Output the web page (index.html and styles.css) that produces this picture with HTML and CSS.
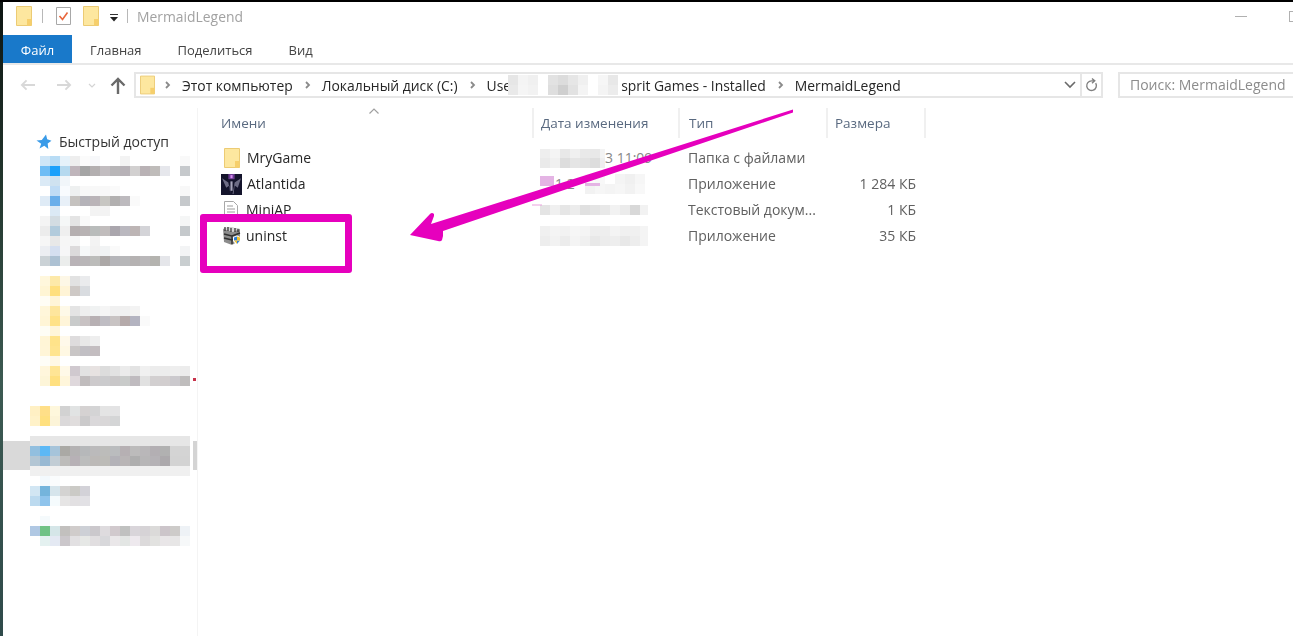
FILE: index.html
```html
<!DOCTYPE html>
<html lang="ru">
<head>
    <meta charset="UTF-8">
    <meta name="viewport" content="width=device-width, initial-scale=1.0">
    <title>MermaidLegend</title>
    <link rel="stylesheet" href="styles.css">
</head>
<body>
    <svg class="defs" width="0" height="0">
        <symbol id="folder" viewBox="0 0 16 20">
            <path d="M.5.5h15v19H.5z" fill="#fde79f" stroke="#eccb74"/>
            <path d="M11 13h4.500v6.500H11z" fill="#f6cf6c"/>
        </symbol>
        <symbol id="chev" viewBox="0 0 6 10">
            <path d="M1 2l3 3-3 3" fill="none" stroke="#8a8a8a" stroke-width="1.800"/>
        </symbol>
    </svg>

    <div class="screen">
        <div class="edge"></div>
        <div class="okno">
            <div class="titulo">
                <svg class="ic-folder"><use href="#folder"/></svg>
                <span class="sep"></span>
                <svg class="ic-check" viewBox="0 0 15 18">
                    <path d="M.5.5h14v17H.5z" fill="#fff" stroke="#a8a8a8"/>
                    <path d="M3.500 9l3 3.500 5-7" fill="none" stroke="#e8663c" stroke-width="1.600"/>
                </svg>
                <svg class="ic-folder ic-folder2"><use href="#folder"/></svg>
                <svg class="ic-drop" viewBox="0 0 10 8">
                    <path d="M1 0h8v1H1z" fill="#333"/>
                    <path d="M1 3h8L5 7.500z" fill="#222"/>
                </svg>
                <span class="sep sep2"></span>
                <span class="titulo-texto">MermaidLegend</span>
                <span class="ventana-btn min"></span>
                <span class="ventana-btn max"></span>
            </div>

            <div class="tabs">
                <span class="tab activo">Файл</span>
                <span class="tab">Главная</span>
                <span class="tab">Поделиться</span>
                <span class="tab">Вид</span>
            </div>

            <div class="direccion">
                <svg class="flecha" viewBox="0 0 16 12"><path d="M16 6H2M7 1L2 6l5 5" fill="none" stroke="#d8d8d8" stroke-width="2"/></svg>
                <svg class="flecha adelante" viewBox="0 0 16 12"><path d="M0 6h14M9 1l5 5-5 5" fill="none" stroke="#d8d8d8" stroke-width="2"/></svg>
                <svg class="mini-chev" viewBox="0 0 8 5"><path d="M1 1l3 3 3-3" fill="none" stroke="#d4d4d4" stroke-width="1.200"/></svg>
                <svg class="arriba" viewBox="0 0 16 17"><path d="M8 17V2M1.500 8.500L8 2l6.500 6.500" fill="none" stroke="#6a6a6a" stroke-width="2.400"/></svg>

                <div class="ruta">
                    <svg class="ic-folder ruta-folder"><use href="#folder"/></svg>
                    <svg class="chev chev-1"><use href="#chev"/></svg>
                    <span class="miga">Этот компьютер</span>
                    <svg class="chev"><use href="#chev"/></svg>
                    <span class="miga">Локальный диск (C:)</span>
                    <svg class="chev"><use href="#chev"/></svg>
                    <span class="miga">Use</span>
                    <svg class="ruta-mosaico" width="113" height="22">
                        <rect x="0" y="1" fill="#e6e6e6"/><rect x="10" y="1" fill="#f4f4f4"/><rect x="20" y="1" fill="#f0f0f0"/>
                        <rect x="0" y="11" fill="#e9e9e9"/><rect x="10" y="11" fill="#f5f5f5"/><rect x="20" y="11" fill="#f2f2f2"/>
                        <rect x="40" y="1" fill="#e2e2e2"/><rect x="50" y="1" fill="#dcdcdc"/><rect x="60" y="1" fill="#e6e6e6"/><rect x="70" y="1" fill="#f0f0f0"/>
                        <rect x="40" y="11" fill="#dedede"/><rect x="50" y="11" fill="#cfcfcf"/><rect x="60" y="11" fill="#e2e2e2"/><rect x="70" y="11" fill="#f4f4f4"/>
                        <rect x="90" y="1" fill="#f6f6f6"/><rect x="100" y="1" fill="#e8e8e8"/>
                        <rect x="90" y="11" fill="#f4f4f4"/><rect x="100" y="11" fill="#ececec"/>
                    </svg>
                    <span class="miga">sprit Games - Installed</span>
                    <svg class="chev"><use href="#chev"/></svg>
                    <span class="miga">MermaidLegend</span>
                    <svg class="ruta-abajo" viewBox="0 0 12 8"><path d="M1 1l5 5 5-5" fill="none" stroke="#6a6a6a" stroke-width="1.600"/></svg>
                    <span class="ruta-refresh">
                        <svg viewBox="0 0 14 16"><path d="M11.500 5.500A5.200 5.200 0 1 1 7 3H10M7.500 .5L10.500 3 7.500 5.500" fill="none" stroke="#808080" stroke-width="1.500"/></svg>
                    </span>
                </div>
                <div class="busqueda">Поиск: MermaidLegend</div>
            </div>

            <div class="cuerpo">
                <aside class="lateral">
                    <div class="acceso">
                        <svg class="estrella" viewBox="0 0 16 16"><path d="M10 .5l1.200 4.800 4.300 1.400-3.800 2.700.6 5.600-4-3.200-4.800 2.700 1.700-4.700L.5 6.500l5.300-.4z" fill="#3a9be8"/></svg>
                        <span>Быстрый доступ</span>
                    </div>
                    <svg class="mosaico" width="194" height="400" viewBox="0 156 194 400">
                        <rect class="sel" x="0" y="441" width="27" height="29" fill="#d9d9d9"/>
                        <rect class="sel" x="190" y="441" width="4" height="29" fill="#d4d4d4"/>
                        <!-- y = 156 -->
                        <rect x="37" y="156" fill="#cfe6f7"/><rect x="47" y="156" fill="#b8dcf5"/><rect x="57" y="156" fill="#e6f2fa"/><rect x="67" y="156" fill="#eeeeee"/><rect x="77" y="156" fill="#fbfbfb"/><rect x="87" y="156" fill="#f7f8fa"/><rect x="117" y="156" fill="#f3f3f3"/><rect x="177" y="156" fill="#f9f9f9"/>
                        <rect x="37" y="166" fill="#6fbdf5"/><rect x="47" y="166" fill="#1aa0fb"/><rect x="57" y="166" fill="#b5d9ef"/><rect x="67" y="166" fill="#bfb5bb"/><rect x="77" y="166" fill="#a5a5a5"/><rect x="87" y="166" fill="#b3afb0"/><rect x="97" y="166" fill="#c2bdc0"/><rect x="107" y="166" fill="#b8b6b8"/><rect x="117" y="166" fill="#b7b2b7"/><rect x="127" y="166" fill="#d2d0d0"/><rect x="137" y="166" fill="#b9b2b5"/><rect x="147" y="166" fill="#bfbcba"/><rect x="157" y="166" fill="#e6e7ec"/><rect x="177" y="166" fill="#c6c9cc"/>
                        <rect x="37" y="176" fill="#dbeaf6"/><rect x="47" y="176" fill="#cfe2f0"/><rect x="57" y="176" fill="#f1f6fa"/>
                        <rect x="47" y="186" fill="#c0dcf5"/><rect x="57" y="186" fill="#f8fbfe"/><rect x="67" y="186" fill="#eef0f0"/><rect x="77" y="186" fill="#f8f8f8"/><rect x="87" y="186" fill="#f8f8f8"/><rect x="97" y="186" fill="#f8f8f8"/><rect x="107" y="186" fill="#fafafa"/><rect x="177" y="186" fill="#f8f8f8"/>
                        <rect x="37" y="196" fill="#dfebf6"/><rect x="47" y="196" fill="#69aeea"/><rect x="57" y="196" fill="#e8f0f8"/><rect x="67" y="196" fill="#c5c2bf"/><rect x="77" y="196" fill="#b5b3b9"/><rect x="87" y="196" fill="#bab4b8"/><rect x="97" y="196" fill="#c7c6c2"/><rect x="107" y="196" fill="#b2b0b0"/><rect x="117" y="196" fill="#bdbabe"/><rect x="127" y="196" fill="#fafafa"/><rect x="177" y="196" fill="#c6c9cc"/>
                        <rect x="47" y="206" fill="#dbe9f5"/><rect x="87" y="206" fill="#f3f3f3"/><rect x="97" y="206" fill="#f3f3f3"/>
                        <rect x="37" y="216" fill="#f4f4f4"/><rect x="47" y="216" fill="#d3dce2"/><rect x="57" y="216" fill="#f5f7f7"/><rect x="67" y="216" fill="#e4e4e4"/><rect x="77" y="216" fill="#f9f9f9"/><rect x="177" y="216" fill="#f5f6f6"/>
                        <rect x="37" y="226" fill="#ececec"/><rect x="47" y="226" fill="#b2cbdc"/><rect x="57" y="226" fill="#efefef"/><rect x="67" y="226" fill="#b5afb0"/><rect x="77" y="226" fill="#b8b3b4"/><rect x="87" y="226" fill="#b9bcbb"/><rect x="97" y="226" fill="#c1bdbd"/><rect x="107" y="226" fill="#aaa6ad"/><rect x="117" y="226" fill="#bab8bf"/><rect x="127" y="226" fill="#bdb5b5"/><rect x="137" y="226" fill="#d4d4d8"/><rect x="177" y="226" fill="#c5c9cc"/>
                        <rect x="37" y="236" fill="#f6f6f6"/><rect x="47" y="236" fill="#e8e8e8"/><rect x="57" y="236" fill="#f6f6f6"/><rect x="67" y="236" fill="#f6f6f6"/><rect x="87" y="236" fill="#f3f3f3"/>
                        <rect x="37" y="246" fill="#eceef2"/><rect x="47" y="246" fill="#d5dff0"/><rect x="57" y="246" fill="#f6f6f7"/><rect x="67" y="246" fill="#dcdadb"/><rect x="77" y="246" fill="#f6f8f9"/><rect x="87" y="246" fill="#f1f1f1"/><rect x="97" y="246" fill="#f1f3f4"/><rect x="107" y="246" fill="#fafafa"/><rect x="177" y="246" fill="#f3f4f5"/>
                        <rect x="37" y="256" fill="#cbd2d6"/><rect x="47" y="256" fill="#adc1d3"/><rect x="57" y="256" fill="#ebedec"/><rect x="67" y="256" fill="#b9b3b7"/><rect x="77" y="256" fill="#b9b6b8"/><rect x="87" y="256" fill="#bcbcba"/><rect x="97" y="256" fill="#aca8a7"/><rect x="107" y="256" fill="#b5b5b9"/><rect x="117" y="256" fill="#b7b7b9"/><rect x="127" y="256" fill="#b5b2b2"/><rect x="137" y="256" fill="#b9b7b9"/><rect x="147" y="256" fill="#b4b3af"/><rect x="157" y="256" fill="#e5e6ea"/><rect x="177" y="256" fill="#c9ced0"/>
                        <!-- y = 276 -->
                        <rect x="37" y="276" fill="#fff7dc"/><rect x="47" y="276" fill="#fde9a9"/><rect x="57" y="276" fill="#fdf7e6"/><rect x="67" y="276" fill="#e2e2e2"/><rect x="77" y="276" fill="#eaebed"/>
                        <rect x="37" y="286" fill="#fff5d4"/><rect x="47" y="286" fill="#ffdf7e"/><rect x="57" y="286" fill="#fff4d6"/><rect x="67" y="286" fill="#cec9c6"/><rect x="77" y="286" fill="#d9dce0"/>
                        <rect x="37" y="296" fill="#fffdf5"/><rect x="47" y="296" fill="#fff5d8"/>
                        <rect x="37" y="306" fill="#fff6da"/><rect x="47" y="306" fill="#fee69d"/><rect x="57" y="306" fill="#fef9e8"/><rect x="67" y="306" fill="#e4e4e4"/><rect x="77" y="306" fill="#eeeeee"/><rect x="87" y="306" fill="#f0f2f2"/><rect x="97" y="306" fill="#f5f5f5"/><rect x="107" y="306" fill="#f0f0f0"/><rect x="117" y="306" fill="#f0f0f0"/><rect x="127" y="306" fill="#f3f3f3"/>
                        <rect x="37" y="316" fill="#fff5d6"/><rect x="47" y="316" fill="#ffe287"/><rect x="57" y="316" fill="#fff5d9"/><rect x="67" y="316" fill="#c9cbcb"/><rect x="77" y="316" fill="#c8c2c3"/><rect x="87" y="316" fill="#b7b0b3"/><rect x="97" y="316" fill="#bfbdc3"/><rect x="107" y="316" fill="#c8c3c3"/><rect x="117" y="316" fill="#b5aaaa"/><rect x="127" y="316" fill="#b3b3c0"/><rect x="137" y="316" fill="#fafafa"/>
                        <rect x="37" y="326" fill="#fefdf5"/><rect x="47" y="326" fill="#fff6da"/>
                        <rect x="37" y="336" fill="#fff5d6"/><rect x="47" y="336" fill="#ffe38a"/><rect x="57" y="336" fill="#fff9ea"/><rect x="67" y="336" fill="#dedcdd"/><rect x="77" y="336" fill="#e8e8e8"/><rect x="87" y="336" fill="#eeeeee"/>
                        <rect x="37" y="346" fill="#fff5d7"/><rect x="47" y="346" fill="#ffe48f"/><rect x="57" y="346" fill="#fff8e3"/><rect x="67" y="346" fill="#c9c6c6"/><rect x="77" y="346" fill="#c1bfc4"/><rect x="87" y="346" fill="#c3bdc0"/>
                        <rect x="37" y="356" fill="#fefdf7"/><rect x="47" y="356" fill="#fff8e6"/>
                        <rect x="37" y="366" fill="#fff6dc"/><rect x="47" y="366" fill="#ffe595"/><rect x="57" y="366" fill="#fff9e8"/><rect x="67" y="366" fill="#d0c9cf"/><rect x="77" y="366" fill="#e2e2e2"/><rect x="87" y="366" fill="#e7e2e1"/><rect x="97" y="366" fill="#dcdcdc"/><rect x="107" y="366" fill="#e2e2e2"/><rect x="117" y="366" fill="#ebebeb"/><rect x="127" y="366" fill="#e3e3e3"/><rect x="137" y="366" fill="#f0f0f0"/><rect x="147" y="366" fill="#ececec"/><rect x="157" y="366" fill="#ececec"/><rect x="167" y="366" fill="#eeeeee"/><rect x="177" y="366" fill="#ececec"/>
                        <rect x="37" y="376" fill="#fdf5d8"/><rect x="47" y="376" fill="#ffe080"/><rect x="57" y="376" fill="#fff6db"/><rect x="67" y="376" fill="#dfd8dc"/><rect x="77" y="376" fill="#c0bcbd"/><rect x="87" y="376" fill="#cdcacc"/><rect x="97" y="376" fill="#cbcbcd"/><rect x="107" y="376" fill="#c9c7c8"/><rect x="117" y="376" fill="#c9cbca"/><rect x="127" y="376" fill="#bfbbbf"/><rect x="137" y="376" fill="#e1e1e1"/><rect x="147" y="376" fill="#d2cfd0"/><rect x="157" y="376" fill="#d2cecf"/><rect x="167" y="376" fill="#cbc9cd"/><rect x="177" y="376" fill="#bfbdbd"/>
                        <rect class="punto" x="190" y="378" fill="#c8324a"/>
                        <!-- y = 406 -->
                        <rect x="27" y="406" fill="#fff0c4"/><rect x="37" y="406" fill="#ffdf88"/><rect x="47" y="406" fill="#fef7dc"/><rect x="57" y="406" fill="#d2d2d2"/><rect x="67" y="406" fill="#e1e3e3"/><rect x="77" y="406" fill="#d5d2d2"/><rect x="87" y="406" fill="#d4d4d5"/><rect x="97" y="406" fill="#e4e4e4"/><rect x="107" y="406" fill="#e3e3e4"/>
                        <rect x="27" y="416" fill="#fff2c9"/><rect x="37" y="416" fill="#ffe07f"/><rect x="47" y="416" fill="#fcf4d8"/><rect x="57" y="416" fill="#dbd9da"/><rect x="67" y="416" fill="#e0dddd"/><rect x="77" y="416" fill="#cbcacb"/><rect x="87" y="416" fill="#dad8da"/><rect x="97" y="416" fill="#d9d7d8"/><rect x="107" y="416" fill="#d4d5d6"/>
                        <!-- y = 436, selected row -->
                        <rect class="banda" x="27" y="436" fill="#e6e6e6"/>
                        <rect x="27" y="446" fill="#92bfdf"/><rect x="37" y="446" fill="#5cb8f5"/><rect x="47" y="446" fill="#a6c4da"/><rect x="57" y="446" fill="#aaa9a5"/><rect x="67" y="446" fill="#b4b2b3"/><rect x="77" y="446" fill="#b6b8ba"/><rect x="87" y="446" fill="#bbbabb"/><rect x="97" y="446" fill="#bcbcba"/><rect x="107" y="446" fill="#babcbe"/><rect x="117" y="446" fill="#b6b0b3"/><rect x="127" y="446" fill="#bcbbbb"/><rect x="137" y="446" fill="#b9b7b9"/><rect x="147" y="446" fill="#b3afb3"/><rect x="157" y="446" fill="#b1b1b1"/><rect x="167" y="446" fill="#d4d4d4"/><rect x="177" y="446" fill="#d4d4d4"/>
                        <rect x="27" y="456" fill="#b3c6d4"/><rect x="37" y="456" fill="#98b9d3"/><rect x="47" y="456" fill="#c2cdd5"/><rect x="57" y="456" fill="#bdbcba"/><rect x="67" y="456" fill="#b7b1b6"/><rect x="77" y="456" fill="#bcbdbd"/><rect x="87" y="456" fill="#bcb9b7"/><rect x="97" y="456" fill="#bcbbb7"/><rect x="107" y="456" fill="#b3b2b8"/><rect x="117" y="456" fill="#b9b5b6"/><rect x="127" y="456" fill="#aeaeae"/><rect x="137" y="456" fill="#b7b6b7"/><rect x="147" y="456" fill="#b5b2b6"/><rect x="157" y="456" fill="#aca9ac"/><rect x="167" y="456" fill="#d3d3d3"/><rect x="177" y="456" fill="#d3d3d3"/>
                        <rect class="banda" x="27" y="466" fill="#f0f0f0"/>
                        <!-- y = 476 -->
                        <rect x="37" y="476" fill="#f3f9fd"/><rect x="47" y="476" fill="#fafcfd"/>
                        <rect x="27" y="486" fill="#d2e6f3"/><rect x="37" y="486" fill="#74b4dc"/><rect x="47" y="486" fill="#d6e5ec"/><rect x="57" y="486" fill="#d4d3d2"/><rect x="67" y="486" fill="#cbcac6"/><rect x="77" y="486" fill="#d3d2d8"/>
                        <rect x="27" y="496" fill="#bcdaef"/><rect x="37" y="496" fill="#8fc4ec"/><rect x="47" y="496" fill="#f5fbfd"/><rect x="57" y="496" fill="#e6e5e5"/><rect x="67" y="496" fill="#e2e0e2"/><rect x="77" y="496" fill="#e2e1e5"/>
                        <!-- y = 516 -->
                        <rect x="37" y="516" fill="#f5fafc"/>
                        <rect x="27" y="526" fill="#b0c8e3"/><rect x="37" y="526" fill="#6fc285"/><rect x="47" y="526" fill="#d5e6e8"/><rect x="57" y="526" fill="#c2c0be"/><rect x="67" y="526" fill="#d0cccb"/><rect x="77" y="526" fill="#cdd0d6"/><rect x="87" y="526" fill="#cbc8cc"/><rect x="97" y="526" fill="#dedbde"/><rect x="107" y="526" fill="#d1c9cd"/><rect x="117" y="526" fill="#c0c1c0"/><rect x="127" y="526" fill="#d9d5da"/><rect x="137" y="526" fill="#d6d3d6"/><rect x="147" y="526" fill="#dbdad9"/><rect x="157" y="526" fill="#ccc5ca"/><rect x="167" y="526" fill="#cdcbc9"/><rect x="177" y="526" fill="#eef2f6"/>
                        <rect x="37" y="536" fill="#e4f1f0"/><rect x="47" y="536" fill="#e4e9f3"/><rect x="57" y="536" fill="#cbc7cb"/><rect x="67" y="536" fill="#e2e0e2"/><rect x="77" y="536" fill="#e6e8e6"/><rect x="87" y="536" fill="#e1dee0"/><rect x="97" y="536" fill="#d8d8db"/><rect x="107" y="536" fill="#eae7e9"/><rect x="117" y="536" fill="#e3e6e4"/><rect x="127" y="536" fill="#eee9ee"/><rect x="137" y="536" fill="#dcdadb"/><rect x="147" y="536" fill="#e2e2e0"/><rect x="157" y="536" fill="#e9e6e8"/><rect x="167" y="536" fill="#e7e6e6"/><rect x="177" y="536" fill="#f6f8f9"/>
                    </svg>
                </aside>

                <main class="lista">
                    <svg class="orden" viewBox="0 0 10 6"><path d="M.5 5.500L5 1l4.500 4.500" fill="none" stroke="#a0a0a0" stroke-width="1.200"/></svg>
                    <div class="cabecera">
                        <span class="col">Имени</span>
                        <span class="col">Дата изменения</span>
                        <span class="col">Тип</span>
                        <span class="col col-fin">Размера</span>
                    </div>

                    <div class="fila">
                        <span class="nombre">
                            <svg class="ic-item ic-item-folder"><use href="#folder"/></svg>
                            MryGame
                        </span>
                        <span class="fecha">
                            <svg class="pix" width="65" height="20">
                                <rect x="0" y="1" fill="#eeeeee"/><rect x="10" y="1" fill="#f4f4f4"/><rect x="20" y="1" fill="#e8e8e8"/><rect x="30" y="1" fill="#f0f0f0"/><rect x="40" y="1" fill="#e9e9e9"/><rect x="50" y="1" fill="#e8e8e8"/><rect x="60" y="1" fill="#f3f3f3"/>
                                <rect x="0" y="10" fill="#eaeaea"/><rect x="10" y="10" fill="#f0f0f0"/><rect x="20" y="10" fill="#dddddd"/><rect x="30" y="10" fill="#e5e5e5"/><rect x="40" y="10" fill="#e2e2e2"/><rect x="50" y="10" fill="#dddddd"/><rect x="60" y="10" fill="#eeeeee"/>
                            </svg>
                            <span class="fecha-txt">3 11:09</span>
                        </span>
                        <span class="tipo">Папка с файлами</span>
                        <span class="tam"></span>
                    </div>

                    <div class="fila">
                        <span class="nombre">
                            <svg class="ic-item ic-atl" viewBox="0 0 20 20">
                                <path d="M0 0h20v20H0z" fill="#14142c"/>
                                <path d="M7 0h6v5H7z" fill="#6a3a90"/>
                                <path d="M9 1h2v3H9z" fill="#d68af0"/>
                                <path d="M1 4l6 4 2 11h2l2-11 6-4-3 9-3-2-1 8H9l-1-8-3 2z" fill="#6d6c85"/>
                                <path d="M9 7h2v9H9z" fill="#a8a6bc"/>
                            </svg>
                            Atlantida
                        </span>
                        <span class="fecha">
                            <span class="fecha-txt fecha-corta">1.2</span>
                            <svg class="pix" width="60" height="20">
                                <rect x="0" y="0" fill="#fafafa"/><rect x="10" y="0" fill="#f8f8f8"/><rect x="30" y="0" fill="#f4f4f4"/><rect x="40" y="0" fill="#f0f0f0"/><rect x="50" y="0" fill="#f6f6f6"/>
                                <rect x="0" y="10" fill="#f2f2f2"/><rect x="10" y="10" fill="#f6f6f6"/><rect x="20" y="10" fill="#f4f4f4"/><rect x="30" y="10" fill="#f6f6f6"/><rect x="40" y="10" fill="#f2f2f2"/><rect x="50" y="10" fill="#f8f8f8"/>
                            </svg>
                        </span>
                        <span class="tipo">Приложение</span>
                        <span class="tam">1 284 КБ</span>
                    </div>

                    <div class="fila">
                        <span class="nombre">
                            <svg class="ic-item ic-doc" viewBox="0 0 14 19">
                                <path d="M.5.5h9l4 4v14H.5z" fill="#fff" stroke="#a8a8a8"/>
                                <path d="M3 5h6M3 8h8M3 11h8M3 14h8" stroke="#9c9c9c"/>
                            </svg>
                            MiniAP
                        </span>
                        <span class="fecha">
                            <svg class="pix" width="108" height="20">
                                <rect x="0" y="5" fill="#e4e4e4"/><rect x="10" y="5" fill="#f0f0f0"/><rect x="20" y="5" fill="#e6e6e6"/><rect x="30" y="5" fill="#ececec"/><rect x="40" y="5" fill="#e0e0e0"/><rect x="50" y="5" fill="#e4e4e4"/><rect x="60" y="5" fill="#e8e8e8"/><rect x="70" y="5" fill="#f2f2f2"/><rect x="80" y="5" fill="#ebebeb"/><rect x="90" y="5" fill="#d8d8d8"/><rect x="100" y="5" fill="#f2f2f2"/>
                            </svg>
                        </span>
                        <span class="tipo">Текстовый докум...</span>
                        <span class="tam">1 КБ</span>
                    </div>

                    <div class="fila">
                        <span class="nombre">
                            <svg class="ic-item ic-uni" viewBox="0 0 20 20">
                                <path d="M1 3l6-2 11 2v11l-8 5-8-3z" fill="#8c8c8c"/>
                                <path d="M1 3l6-2 11 2-7 3z" fill="#d8d8d8"/>
                                <path d="M3 1v4M6 1v4M9 2v4M13 2v4M16 3v3" stroke="#2c2c2c" stroke-width="1.200"/>
                                <path d="M2 8l8 2v8M10 10l8-3M2 12l8 2M10 14l8-3" fill="none" stroke="#303030" stroke-width="1.400"/>
                                <path d="M11 11l4-1.500 4 1.500v4l-4 4.500-4-4.500z" fill="#fff"/>
                                <path d="M12 11.500l3-1v4h-3z" fill="#2e7fd8"/>
                                <path d="M15 14.500h3l-3 3.500z" fill="#2e7fd8"/>
                                <path d="M15 10.500l3 1v3h-3zM12 14.500h3V18z" fill="#f0c030"/>
                            </svg>
                            uninst
                        </span>
                        <span class="fecha">
                            <svg class="pix" width="108" height="20">
                                <rect x="0" y="0" fill="#f0f0f0"/><rect x="10" y="0" fill="#f4f4f4"/><rect x="20" y="0" fill="#f2f2f2"/><rect x="30" y="0" fill="#f6f6f6"/><rect x="40" y="0" fill="#f4f4f4"/><rect x="50" y="0" fill="#eeeeee"/><rect x="60" y="0" fill="#eeeeee"/><rect x="70" y="0" fill="#f4f4f4"/><rect x="80" y="0" fill="#f0f0f0"/><rect x="90" y="0" fill="#f0f0f0"/><rect x="100" y="0" fill="#f4f4f4"/>
                                <rect x="0" y="10" fill="#ededed"/><rect x="10" y="10" fill="#f2f2f2"/><rect x="20" y="10" fill="#ececec"/><rect x="30" y="10" fill="#f4f4f4"/><rect x="40" y="10" fill="#f0f0f0"/><rect x="50" y="10" fill="#e8e8e8"/><rect x="60" y="10" fill="#ececec"/><rect x="70" y="10" fill="#eeeeee"/><rect x="80" y="10" fill="#e8e8e8"/><rect x="90" y="10" fill="#ededed"/><rect x="100" y="10" fill="#f4f4f4"/>
                            </svg>
                        </span>
                        <span class="tipo">Приложение</span>
                        <span class="tam">35 КБ</span>
                    </div>
                </main>
            </div>
        </div>

        <!-- anotaciones encima de la ventana -->
        <div class="marco"></div>
        <svg class="anotacion" width="1293" height="636">
            <path d="M540 176h14v10h-14zM585 183h15v3h-15z" fill="#e4b4e4"/>
            <path d="M532 204.500h10v1h-10z" fill="#e8a0dc"/>
            <path d="M410 235L430 214Q432 212 434 214L434 216L431 224L793 109.500L793 112.500L443 231L443 236L442 240Q441 242 438 241Z" fill="#e600bd"/>
        </svg>
    </div>
</body>
</html>
```

FILE: styles.css
```css
* {
    box-sizing: border-box;
}

html, body {
    margin: 0;
    height: 100%;
    overflow: hidden;
}

body {
    background: #fff;
    color: #3a3a3a;
    font-family: "Open Sans", "Noto Sans", sans-serif;
    font-size: 14px;
}

.defs {
    position: absolute;
}

svg {
    display: block;
    flex-shrink: 0;
}

.screen {
    display: flex;
    height: 636px;
    border-top: 2px solid #000;
    position: relative;
}

.edge {
    width: 3px;
    background: linear-gradient(180deg, #0d1512 0, #24382f 30%, #3c5a52 60%, #2f4a4a 100%);
}

.okno {
    flex: 1;
    min-width: 0;
    display: flex;
    flex-direction: column;
}

/* el original es una captura reescalada, el texto sale algo borroso */
.titulo,
.tabs,
.direccion,
.acceso,
.cabecera,
.tipo,
.tam,
.nombre {
    filter: blur(.3px);
}

/* barra de titulo */
.titulo {
    height: 33px;
    display: flex;
    align-items: center;
    padding: 0 0 5px 13px;
}

.ic-folder {
    width: 16px;
    height: 20px;
}

.sep {
    width: 1px;
    height: 14px;
    margin: 0 13px 0 10px;
    background: #b8b8b8;
}

.sep2 {
    margin: 0 9px 0 8px;
}

.ic-check {
    width: 15px;
    height: 18px;
}

.ic-folder2 {
    margin-left: 12px;
}

.ic-drop {
    width: 10px;
    height: 8px;
    margin-left: 10px;
    margin-top: 4px;
}

.titulo-texto {
    color: #a2a2a2;
    font-size: 13.900px;
    margin-right: auto;
}

.ventana-btn.min {
    width: 12px;
    height: 1px;
    background: #b0b0b0;
    margin-right: 42px;
}

.ventana-btn.max {
    width: 4px;
    height: 11px;
    border: 1px solid #b0b0b0;
    border-right: none;
}

/* pestañas */
.tabs {
    height: 30px;
    display: flex;
    border-bottom: 2px solid #e8e8e8;
}

.tab {
    line-height: 30px;
    height: 28px;
    font-size: 13px;
    color: #444;
    margin-right: 36px;
}

.tab:nth-child(2) {
    margin-left: 18px;
}

.tab.activo {
    width: 69px;
    margin-right: 0;
    text-align: center;
    background: #1979ca;
    color: #fff;
}

/* fila de direccion */
.direccion {
    height: 43px;
    display: flex;
    align-items: center;
    padding: 7px 0 10px 17px;
}

.flecha {
    width: 15px;
    height: 12px;
}

.flecha.adelante {
    margin-left: 22px;
}

.mini-chev {
    width: 8px;
    height: 5px;
    margin-left: 16px;
}

.arriba {
    width: 16px;
    height: 17px;
    margin-left: 14px;
}

.ruta {
    width: 969px;
    height: 26px;
    margin-left: 8px;
    display: flex;
    align-items: center;
    border: 2px solid #e6e6e6;
    padding-left: 4px;
    font-size: 13.900px;
}

.ruta-folder {
    width: 15px;
    height: 20px;
}

.chev {
    width: 6px;
    height: 10px;
    margin: 0 11px 0 12px;
}

.chev-1 {
    margin: 0 11px 0 10px;
}

.miga {
    color: #262626;
    white-space: nowrap;
}

.ruta-mosaico {
    margin-left: -3px;
    background: #fff;
}

.ruta-mosaico rect,
.pix rect,
.mosaico rect {
    width: 10px;
    height: 10px;
}

.ruta-abajo {
    width: 12px;
    height: 8px;
    margin-left: auto;
    margin-right: 4px;
}

.ruta-refresh {
    width: 21px;
    height: 22px;
    border-left: 2px solid #e6e6e6;
    display: flex;
    align-items: center;
    justify-content: center;
}

.ruta-refresh svg {
    width: 13px;
    height: 15px;
}

.busqueda {
    flex: 1;
    height: 26px;
    margin-left: 15px;
    border: 2px solid #e6e6e6;
    border-right: none;
    line-height: 22px;
    padding-left: 10px;
    color: #8c8c8c;
    white-space: nowrap;
    overflow: hidden;
}

/* cuerpo */
.cuerpo {
    flex: 1;
    display: flex;
    min-height: 0;
}

.lateral {
    width: 195px;
    border-right: 1px solid #f4f4f4;
    flex-shrink: 0;
}

.acceso {
    height: 48px;
    display: flex;
    align-items: center;
    padding: 19px 0 0 33px;
    color: #333;
}

.estrella {
    width: 16px;
    height: 16px;
    margin-right: 7px;
}

.mosaico rect.sel {
    width: 27px;
    height: 29px;
}

.mosaico rect.sel + rect.sel {
    width: 4px;
}

.mosaico rect.banda {
    width: 160px;
}

.mosaico rect.punto {
    width: 3px;
    height: 3px;
}

.lista {
    flex: 1;
    position: relative;
    padding-left: 1px;
}

.orden {
    position: absolute;
    left: 171px;
    top: 0;
    width: 10px;
    height: 6px;
}

.cabecera,
.fila {
    display: grid;
    grid-template-columns: 335px 146px 148px 98px;
}

.cabecera {
    height: 30px;
    margin-bottom: 7px;
    color: #5a6a80;
    font-size: 13.500px;
    line-height: 30px;
}

.col {
    padding-left: 7px;
    border-right: 2px solid #f0f0f0;
}

.col:first-child {
    padding-left: 22px;
}

.col:nth-child(3) {
    padding-left: 9px;
}

.fila {
    height: 26px;
    line-height: 26px;
    color: #606060;
}

.nombre {
    display: flex;
    align-items: center;
    padding-left: 22px;
    color: #262626;
}

.ic-item {
    margin-right: 5px;
}

.ic-item-folder {
    width: 16px;
    height: 20px;
    margin-left: 3px;
    margin-right: 7px;
}

.ic-atl {
    width: 21px;
    height: 21px;
}

.ic-doc {
    width: 14px;
    height: 19px;
    margin-left: 3px;
    margin-right: 8px;
}

.ic-uni {
    width: 20px;
    height: 20px;
    margin-left: 1px;
    margin-right: 4px;
}

.fecha {
    display: flex;
    align-items: center;
    padding-left: 6px;
}

.fecha-txt {
    color: #888;
}

.fecha-corta {
    width: 45px;
    padding-left: 15px;
}

.tipo {
    padding-left: 8px;
    white-space: nowrap;
}

.tam {
    padding-right: 10px;
    text-align: right;
    white-space: nowrap;
}

/* marco y flecha */
.marco {
    position: absolute;
    left: 200px;
    top: 212px;
    width: 152px;
    height: 59px;
    border: 7px solid #e600bd;
    border-top-width: 8px;
    border-radius: 3px;
}

.anotacion {
    position: absolute;
    left: 0;
    top: -2px;
    pointer-events: none;
}
```
